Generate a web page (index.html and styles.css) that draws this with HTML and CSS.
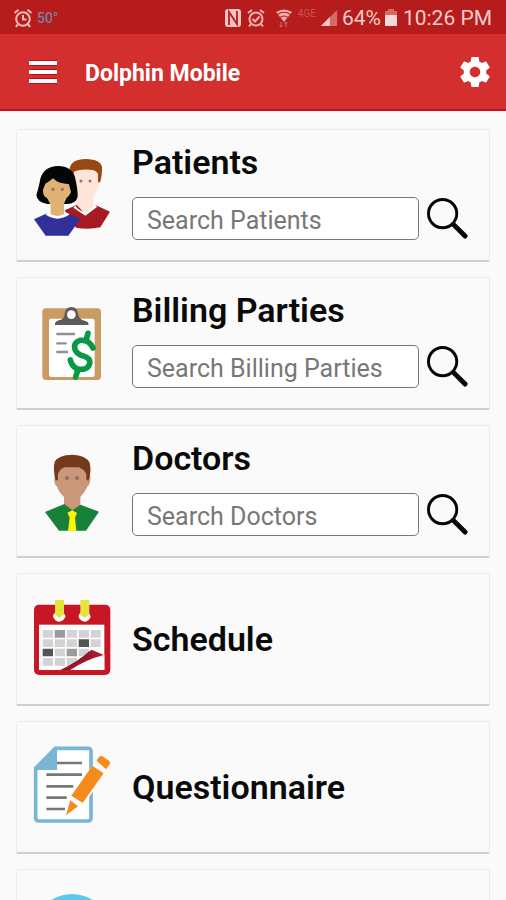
FILE: index.html
```html
<!DOCTYPE html>
<html lang="en">
<head>
<meta charset="utf-8">
<meta name="viewport" content="width=device-width, initial-scale=1">
<title>Dolphin Mobile</title>
<link rel="stylesheet" href="styles.css">
</head>
<body>
<div class="status">
  <svg class="status-icon" viewBox="0 0 20 20" fill="none" stroke="#f3b9b6" stroke-width="2"><circle cx="10" cy="11" r="6.8"/><path d="M1.5 5 5.5 1.8M18.5 5l-4-3.2M10 7v4.500h3.500M5 16l-2 3M15 16l2 3"/></svg>
  <span class="temp">50°</span>
  <span class="spacer"></span>
  <svg class="status-icon nfc" viewBox="0 0 18 20"><rect x="1" y="1" width="16" height="18" rx="3" fill="#f0c4c2"/><path d="M5 17V4l8 12V3" fill="none" stroke="#b71c1c" stroke-width="1.800"/></svg>
  <svg class="status-icon" viewBox="0 0 20 20" fill="none" stroke="#f0b5b2" stroke-width="2"><circle cx="10" cy="11" r="6.500"/><path d="M2 5 6 2M18 5l-4-3M6.500 11l2.500 2.500 4.500-5M5 16l-2 2.500M15 16l2 2.500"/></svg>
  <svg class="status-icon wifi" viewBox="0 0 20 20"><path d="M2 4Q10-1 18 4L10 14Z" fill="#eeb0ae"/><path d="M3.500 6.500Q10 2 16.500 6.500M6 9.500q4-3 8 0" fill="none" stroke="#b71c1c" stroke-width="1.200"/><path d="M7 14v5M5.500 17.500 7 19l1.500-1.500M12 19v-5M10.500 15.500 12 14l1.500 1.500" fill="none" stroke="#d9716f"/></svg>
  <span class="network">4GE</span>
  <svg class="status-icon signal" viewBox="0 0 20 20"><path d="M1 19 19 1v18Z" fill="#d66a68"/><path d="M1 19 11 9v10Z" fill="#f3c4c2"/></svg>
  <span class="reading">64%</span>
  <svg class="battery" viewBox="0 0 12 20"><path d="M3 1h6v2h3v5H0V3h3Z" fill="#d46866"/><path d="M0 7h12v11H0Z" fill="#f9d9d7"/></svg>
  <time class="reading">10:26 PM</time>
</div>
<header class="bar">
  <button class="icon-button" aria-label="Menu"><svg width="30" height="26" viewBox="0 0 30 26"><path d="M1 4h28M1 13h28M1 22h28" stroke="#c00d20" stroke-width="6"/><path d="M1 4h28M1 13h28M1 22h28" stroke="#fff" stroke-width="4"/></svg></button>
  <h1 class="bar-title">Dolphin Mobile</h1>
  <button class="icon-button" aria-label="Settings"><svg width="36" height="36" viewBox="0 0 24 24"><path fill="#fff" d="M19.430 12.980c.04-.32.07-.64.07-.98s-.03-.66-.07-.98l2.110-1.650c.19-.15.24-.42.12-.64l-2-3.460c-.12-.22-.39-.3-.61-.22l-2.490 1c-.52-.4-1.080-.73-1.690-.98l-.38-2.650C14.460 2.180 14.250 2 14 2h-4c-.25 0-.46.18-.49.42l-.38 2.650c-.61.25-1.170.59-1.690.98l-2.490-1c-.23-.09-.49 0-.61.22l-2 3.460c-.13.22-.07.49.12.64l2.110 1.650c-.04.32-.07.65-.07.98s.03.66.07.98l-2.110 1.650c-.19.15-.24.42-.12.64l2 3.460c.12.22.39.3.61.22l2.490-1c.52.4 1.080.73 1.690.98l.38 2.650c.03.24.24.42.49.42h4c.25 0 .46-.18.49-.42l.38-2.650c.61-.25 1.170-.59 1.690-.98l2.490 1c.23.09.49 0 .61-.22l2-3.460c.12-.22.07-.49-.12-.64l-2.110-1.650zM12 15.500c-1.930 0-3.500-1.570-3.500-3.500s1.570-3.500 3.500-3.500 3.500 1.570 3.500 3.500-1.570 3.500-3.500 3.500z"/></svg></button>
</header>
<main class="cards">
  <section class="card">
    <svg class="card-icon" viewBox="21 15 240 243">
      <path d="M140 60H222Q231 94 219 112Q212 133 205 141V170L187 192 155 168 140 140Z" fill="#ffe4d9"/>
      <path d="M134 56Q138 28 182 27Q228 28 231 52Q232 78 225 97H219V72Q214 62 202 60Q170 56 149 64L143 75Z" fill="#984815"/>
      <path d="M119 181 155 165 183 194 213 166 255 185 226 232Q190 240 153 233Z" fill="#a71923"/>
      <path d="M151 168Q166 185 183 188L210 166 217 170 181 197 145 173Z" fill="#fff"/>
      <path d="M34 135Q43 105 46 86Q57 49 99 48Q141 49 150 82Q159 120 158 140Q153 161 126 162H67Q36 157 34 135Z" fill="#020605"/>
      <path d="M61 101Q76 93 84 85Q99 101 132 103L138 127Q132 139 124 145L117 161V191L98 205 77 192V164L66 144Q53 139 54 119Z" fill="#dfb276"/>
      <path d="M27 208 66 190Q97 214 129 190L166 207 130 257H62Z" fill="#31309a"/>
      <path d="M69 188Q97 208 126 188L134 193Q97 219 61 193Z" fill="#fff"/>
      <g fill="#997269"><circle cx="84" cy="118" r="5"/><circle cx="112" cy="118" r="5"/><circle cx="168" cy="93" r="4.500"/><circle cx="195" cy="93" r="4.500"/></g>
    </svg>
    <div class="card-body with-search">
      <h2 class="card-title"><label for="patients">Patients</label></h2>
      <div class="search">
        <input class="search-box" id="patients" type="text" placeholder="Search Patients">
        <button class="search-button" aria-label="Search patients"><svg width="41" height="41" viewBox="0 0 42 42" fill="none" stroke="#050505"><circle cx="16" cy="16" r="14.500" stroke-width="3"/><path d="m27 27 12 12" stroke-width="5" stroke-linecap="round"/></svg></button>
      </div>
    </div>
  </section>
  <section class="card">
    <svg class="card-icon" viewBox="36 39 240 243">
      <rect x="67" y="55" width="176" height="215" rx="11" fill="#ca9b63"/>
      <rect x="87" y="86" width="137" height="175" rx="7" fill="#fff"/>
      <path d="M105 105Q103 96 116 91Q132 89 134 72Q136 51 154 51Q173 51 175 74Q178 89 194 92Q208 95 205 105Z" fill="#5b5b60"/><circle cx="154" cy="74" r="13" fill="#fff"/>
      <path d="M109 132h56M109 160h31M109 186h35" stroke="#929095" stroke-width="7"/>
      <path d="M219 174Q207 148 180 151Q158 158 166 181Q173 195 193 199Q217 207 206 228Q198 240 177 238Q157 234 151 210M204 130 198 151M174 239 167 261" fill="none" stroke="#079943" stroke-width="17" stroke-linecap="round"/>
    </svg>
    <div class="card-body with-search">
      <h2 class="card-title"><label for="billing">Billing Parties</label></h2>
      <div class="search">
        <input class="search-box" id="billing" type="text" placeholder="Search Billing Parties">
        <button class="search-button" aria-label="Search billing parties"><svg width="41" height="41" viewBox="0 0 42 42" fill="none" stroke="#050505"><circle cx="16" cy="16" r="14.500" stroke-width="3"/><path d="m27 27 12 12" stroke-width="5" stroke-linecap="round"/></svg></button>
      </div>
    </div>
  </section>
  <section class="card">
    <svg class="card-icon" viewBox="36 33 240 243">
      <path d="M108 76 204 76 211 112Q212 132 202 140Q194 158 181 171V194L157 218 132 195V171Q116 155 111 140Q99 131 104 111Z" fill="#c9987a"/>
      <path d="M107 121Q98 88 104 65Q115 45 157 44Q198 46 209 68Q215 92 206 121H199V101Q190 87 177 82H134Q119 87 114 102V121Z" fill="#75391d"/>
      <path d="M75 216 133 192 157 211 181 194 237 215 198 272H117Z" fill="#19803a"/>
      <path d="M142 218 157 211 171 219 165 233 169 273H144L149 233Z" fill="#fff209"/>
      <g fill="#8d7058"><circle cx="141" cy="114" r="6"/><circle cx="171" cy="114" r="6"/></g>
    </svg>
    <div class="card-body with-search">
      <h2 class="card-title"><label for="doctors">Doctors</label></h2>
      <div class="search">
        <input class="search-box" id="doctors" type="text" placeholder="Search Doctors">
        <button class="search-button" aria-label="Search doctors"><svg width="41" height="41" viewBox="0 0 42 42" fill="none" stroke="#050505"><circle cx="16" cy="16" r="14.500" stroke-width="3"/><path d="m27 27 12 12" stroke-width="5" stroke-linecap="round"/></svg></button>
      </div>
    </div>
  </section>
  <section class="card">
    <svg class="card-icon" viewBox="36 42 240 243">
      <rect x="42" y="59" width="229" height="211" rx="15" fill="#c71726"/><rect x="57" y="119" width="196" height="136" fill="#fff"/>
      <path d="M105 83Q99 88 99 95Q106 110 118 110Q132 108 137 94L131 83ZM181 83Q175 89 176 97Q184 110 194 110Q207 108 212 95L207 83Z" fill="#fff"/>
      <path d="M105 45H132V88L118 98 105 89ZM181 45H208V88L194 98 181 89Z" fill="#e5e43a"/>
      <path fill="#d3d3d5" d="M68 135h31v23H68ZM140 135h31v23h-31ZM176 135h31v23h-31ZM212 135h30v23h-30ZM68 163h31v23H68ZM104 163h31v23h-31ZM140 163h31v23h-31ZM212 163h30v23h-30ZM104 191h31v23h-31ZM176 191h31v23h-31ZM68 219h31v23H68ZM104 219h31v23h-31ZM140 219h31v23h-31Z"/>
      <path fill="#9b9b9d" d="M104 135h31v23h-31ZM140 191h31v23h-31Z"/><path fill="#545456" d="M68 191h31v23H68ZM176 163h31v23h-31Z"/>
      <path d="M122 255Q165 235 196 210L253 210V255Z" fill="#fff"/><path d="M122 255Q176 229 214 194Q233 201 251 210Q198 224 151 255Z" fill="#ac1730"/><path d="M122 255Q176 229 208 199L215 216Q170 233 145 255Z" fill="#8d1a2d"/>
    </svg>
    <div class="card-body"><h2 class="card-title">Schedule</h2></div>
  </section>
  <section class="card">
    <svg class="card-icon" viewBox="36 51 240 243">
      <path d="M106 55H204Q213 55 213 64V264Q213 273 204 273H56Q47 273 47 264V115Z" fill="#fff" stroke="#79b5d5" stroke-width="11"/><path d="M102 55H111V120H47V110Z" fill="#79b5d5"/>
      <path d="M111 99h75M79 134h107M79 169h81M79 203h61M79 237h56" stroke="#777678" stroke-width="8"/>
      <path d="m224 99 38 26-80 110-48 23 11-57Z" fill="#fff"/>
      <path d="m217 107 34 23-63 89-34-22ZM151 211l23 18-36 27ZM230 92Q238 75 248 79L265 91Q274 97 268 104L258 118Z" fill="#f58b1d"/>
    </svg>
    <div class="card-body"><h2 class="card-title">Questionnaire</h2></div>
  </section>
  <section class="card">
    <svg class="card-icon" viewBox="0 0 80 81"><circle cx="40" cy="38" r="39" fill="#5bc9ed"/></svg>
  </section>
</main>
</body>
</html>
```
FILE: styles.css
```css
* { box-sizing: border-box; }
body {
  margin: 0;
  height: 100vh;
  display: flex;
  flex-direction: column;
  background: #fafafa;
  color: #0a0a0a;
  font-family: Roboto, "Liberation Sans", sans-serif;
}
h1, h2 { margin: 0; }
button { padding: 0; border: 0; background: none; display: flex; }
.status {
  flex: none;
  height: 34px;
  display: flex;
  align-items: center;
  gap: 4px;
  padding: 2px 14px 0 13px;
  background: #b71c1c;
  color: #f6cdcb;
}
.status-icon { width: 20px; height: 20px; flex: none; }
.nfc, .signal { width: 18px; }
.temp { font-size: 14px; font-weight: 500; color: #787e9c; }
.spacer { flex: 1; }
.wifi { margin-left: 4px; }
.network { font-size: 10px; color: #cc5553; align-self: flex-start; padding-top: 6px; }
.signal { margin-right: -2px; }
.reading { font-size: 21px; margin-left: 2px; }
.battery { width: 12px; height: 20px; }
.bar {
  flex: none;
  height: 77px;
  display: flex;
  align-items: center;
  padding: 0 13px 0 28px;
  background: #d32f2f;
  border-bottom: 2px solid #c40f26;
}
.bar-title { flex: 1; margin-left: 27px; padding-top: 4px; font-size: 23px; line-height: 28px; font-weight: 700; color: #fff; }
.cards {
  flex: 1;
  min-height: 0;
  overflow-y: auto;
  scrollbar-width: none;
  display: flex;
  flex-direction: column;
  gap: 15px;
  padding: 18px 16px;
}
.card {
  flex: none;
  min-height: 133px;
  display: flex;
  align-items: center;
  gap: 20px;
  padding: 0 21px 0 15px;
  border: 1px solid #ececec;
  border-bottom: 2px solid #cfcfcf;
  border-radius: 2px;
}
.card-icon { width: 80px; height: 81px; flex: none; overflow: visible; }
.card-body { flex: 1; min-width: 0; }
.with-search { padding-bottom: 8px; }
.card-title { font-size: 34px; line-height: 40px; font-weight: 600; }
.search { display: flex; align-items: center; gap: 8px; margin-top: 15px; }
.search-box {
  flex: 1;
  min-width: 0;
  height: 43px;
  padding: 4px 14px 0;
  border: 1px solid #777;
  border-radius: 5px;
  background: #fff;
  color: #222;
  font: 400 25px/36px Roboto, "Liberation Sans", sans-serif;
}
.search-box::placeholder { color: #777; opacity: 1; }
.search-button { flex: none; }
```
